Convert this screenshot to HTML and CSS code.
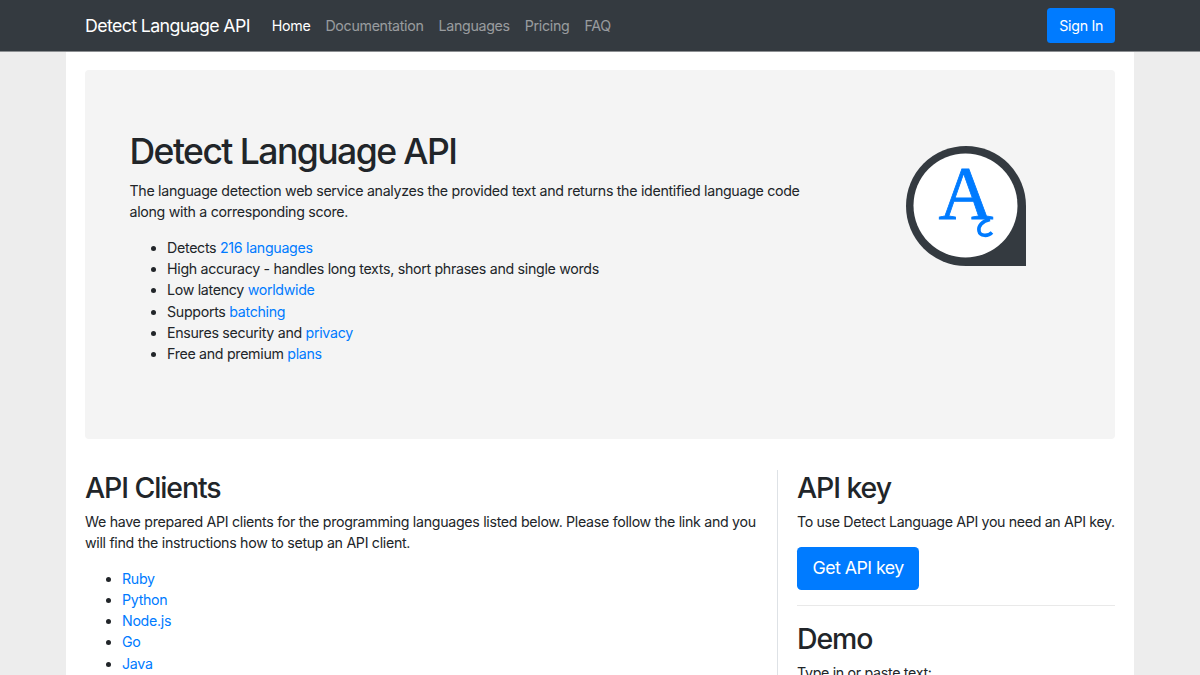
FILE: index.html
```html
<!DOCTYPE html>
<html lang="en">
   <head>
      <meta charset="UTF-8">
      <meta name="viewport" content="width=device-width, initial-scale=1.0">
      <title>Detect Language API</title>
      <link rel="stylesheet" href="styles.css">
   </head>
   <body>
      <header class="navbar">
         <div class="navbar-left">
            <a class="brand" href="#">Detect Language API</a>
            <nav class="nav-links">
               <a class="active" href="#">Home</a>
               <a href="#">Documentation</a>
               <a href="#">Languages</a>
               <a href="#">Pricing</a>
               <a href="#">FAQ</a>
            </nav>
         </div>
         <a class="btn btn-signin" href="#">Sign In</a>
      </header>
      <main class="container">
         <section class="hero">
            <div class="hero-text">
               <h1>Detect Language API</h1>
               <p>The language detection web service analyzes the provided text and returns the identified language code along with a corresponding score.</p>
               <ul>
                  <li>Detects <a href="#">216 languages</a></li>
                  <li>High accuracy - handles long texts, short phrases and single words</li>
                  <li>Low latency <a href="#">worldwide</a></li>
                  <li>Supports <a href="#">batching</a></li>
                  <li>Ensures security and <a href="#">privacy</a></li>
                  <li>Free and premium <a href="#">plans</a></li>
               </ul>
            </div>
            <svg class="hero-logo" width="120" height="120" viewBox="0 0 120 120">
               <path d="M60 0A60 60 0 0 1 120 60V120H60A60 60 0 0 1 60 0Z" fill="#343a40"/>
               <circle cx="59.5" cy="59.5" r="52" fill="#fff"/>
               <text class="logo-letter" x="60" y="73" text-anchor="middle">A</text>
               <path d="M84 73.500C76 75 72 80 73 85C74 90.500 82 90.500 86 86.500" fill="none" stroke="#007bff" stroke-width="3.600"/>
            </svg>
         </section>
         <div class="columns">
            <section class="col-main">
               <h2>API Clients</h2>
               <p>We have prepared API clients for the programming languages listed below. Please follow the link and you will find the instructions how to setup an API client.</p>
               <ul>
                  <li><a href="#">Ruby</a></li>
                  <li><a href="#">Python</a></li>
                  <li><a href="#">Node.js</a></li>
                  <li><a href="#">Go</a></li>
                  <li><a href="#">Java</a></li>
                  <li><a href="#">PHP</a></li>
               </ul>
            </section>
            <aside class="col-side">
               <h2>API key</h2>
               <p class="key-note">To use Detect Language API you need an API key.</p>
               <a class="btn btn-large" href="#">Get API key</a>
               <hr>
               <h2>Demo</h2>
               <p>Type in or paste text:</p>
            </aside>
         </div>
      </main>
   </body>
</html>
```

FILE: styles.css
```css
html,
body {
height: 675px;
overflow: hidden;
}
body {
font-family: Inter, "Noto Sans", sans-serif;
font-size: 14.22px;
line-height: 1.5;
letter-spacing: -0.022em;
margin: 0;
padding: 0;
color: #212529;
background-color: #ededed;
}
a {
color: #007bff;
text-decoration: none;
}
.navbar {
display: flex;
justify-content: space-between;
align-items: center;
height: 51px;
padding: 0 85px;
background-color: #343a40;
border-bottom: 1px solid #8c8f92;
}
.navbar-left {
display: flex;
align-items: center;
}
.brand {
color: #fff;
font-size: 17.78px;
letter-spacing: -0.035em;
margin: 1px 22px 0 0;
}
.nav-links {
display: flex;
gap: 15px;
}
.nav-links a {
color: rgba(255, 255, 255, 0.5);
}
.nav-links a.active {
color: #fff;
}
.btn {
display: inline-block;
color: #fff;
background-color: #007bff;
border-radius: 3.5px;
}
.btn-signin {
padding: 6.5px 12px;
}
.btn-large {
padding: 9px 15.5px;
font-size: 17.78px;
line-height: 1.4;
letter-spacing: -0.031em;
border-radius: 4.5px;
}
.container {
width: 1030px;
height: 624px;
margin: 0 auto;
padding: 18px 19px 0;
overflow: hidden;
background-color: #fff;
}
.hero {
display: flex;
justify-content: space-between;
align-items: flex-start;
height: 369px;
padding: 61px 89px 0 44.5px;
box-sizing: border-box;
background-color: #f4f4f4;
border-radius: 4px;
}
.hero-text {
width: 675px;
}
.hero-text ul {
padding-left: 37.5px;
}
.hero-logo {
flex: none;
margin-top: 14.5px;
}
.logo-letter {
font-family: "Liberation Serif", serif;
font-size: 76px;
letter-spacing: 0;
fill: #007bff;
stroke: #007bff;
stroke-width: 0.8;
}
h1,
h2 {
font-weight: 500;
line-height: 1.2;
margin: 0 0 6px;
}
h1 {
font-size: 35.56px;
letter-spacing: -0.044em;
}
h2 {
font-size: 28.44px;
letter-spacing: -0.038em;
}
p {
margin: 0 0 14.22px;
}
.key-note {
letter-spacing: -0.025em;
margin-bottom: 15px;
white-space: nowrap;
}
ul {
margin: 0 0 14.22px;
padding-left: 37px;
}
.columns {
display: flex;
margin-top: 31px;
}
.col-main {
width: 693px;
padding: 0.5px 19px 0 0;
box-sizing: border-box;
border-right: 1px solid #dee2e6;
}
.col-side {
flex: 1;
padding: 0.5px 0 0 19px;
}
hr {
border: 0;
border-top: 1px solid #e9e9e9;
margin: 15px 0 16px;
}
```
